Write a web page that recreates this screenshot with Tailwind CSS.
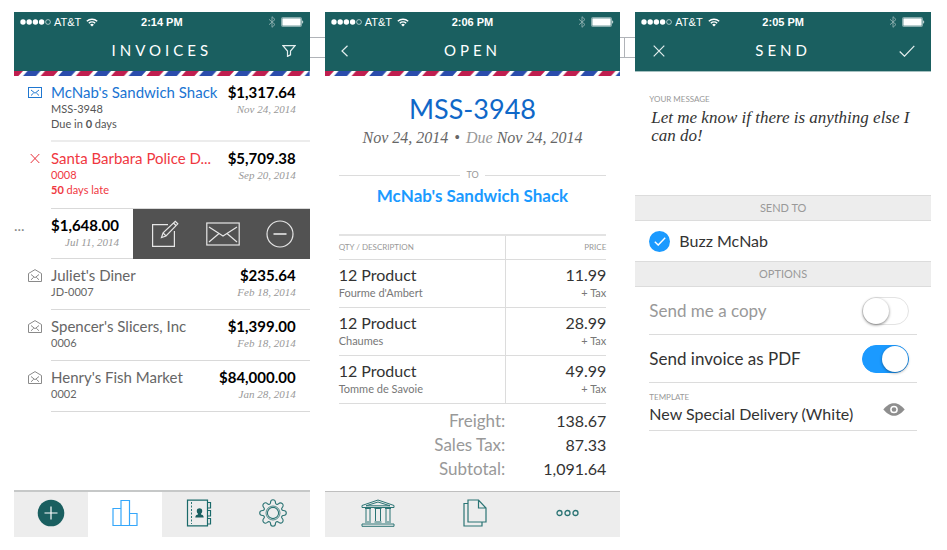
<!DOCTYPE html>
<html lang="en">
<head>
    <meta charset="UTF-8">
    <meta name="viewport" content="width=device-width, initial-scale=1.0">
    <title>Invoices</title>
    <script src="https://cdn.jsdelivr.net/npm/@tailwindcss/browser@4"></script>
</head>
<body class="bg-white font-['Lato',sans-serif] text-[#333]">
    <!-- shared symbols -->
    <svg class="absolute w-0 h-0" aria-hidden="true">
        <defs>
            <pattern id="airmail" width="35.2" height="5" patternUnits="userSpaceOnUse">
                <rect width="35.2" height="5" fill="#fff"/>
                <path d="M13.500 0h13l-4.500 5h-13z" fill="#2a4cac"/>
                <path d="M31.100 0h13l-4.500 5h-13zM-4.100 0h13l-4.500 5h-13z" fill="#bf1e4f"/>
            </pattern>
            <symbol id="signal" viewBox="0 0 31 12">
                <g fill="#fff"><circle cx="3" cy="6" r="2.700"/><circle cx="9.200" cy="6" r="2.700"/><circle cx="15.400" cy="6" r="2.700"/><circle cx="21.600" cy="6" r="2.700"/></g>
                <circle cx="28" cy="6" r="2.400" fill="none" stroke="#fff" stroke-width=".6"/>
            </symbol>
            <symbol id="wifi" viewBox="0 0 12 9">
                <g fill="none" stroke="#fff" stroke-width="1.400"><path d="M.8 3.300a7.500 7.500 0 0 1 10.400 0"/><path d="M2.800 5.300a4.600 4.600 0 0 1 6.400 0"/></g>
                <path d="M6 8.600L4.100 6.700a2.700 2.700 0 0 1 3.800 0z" fill="#fff"/>
            </symbol>
            <symbol id="bluetooth" viewBox="0 0 8 12">
                <path d="M1 3.300l6 5.200L4 11.300V.7l3 2.800-6 5.200" fill="none" stroke="#8fb0b0" stroke-width=".9"/>
            </symbol>
            <symbol id="battery" viewBox="0 0 23 10">
                <rect x=".5" y=".5" width="20" height="9" rx="1" fill="none" stroke="#b5cccc" stroke-width=".7"/>
                <rect x="1.300" y="1.300" width="18.400" height="7.400" fill="#fff"/>
                <path d="M21.300 3.300c1.200.4 1.200 3 0 3.400z" fill="#fff"/>
            </symbol>
            <symbol id="opened" viewBox="0 0 14 13">
                <g fill="none" stroke="#8a8a8a"><path d="M.5 4.500L7 .6l6.500 3.900v8H.5z"/><path d="M3 5.500l4 3.200 4-3.200M3 10.800l2.700-2.500M11 10.800L8.300 8.300"/></g>
            </symbol>
        </defs>
    </svg>

    <main class="relative grid grid-cols-3 gap-[15px] min-h-screen pl-[14px] pr-4 pt-3 pb-[13px]">
        <!-- wire behind the screens -->
        <div class="absolute top-[37px] inset-x-1/4 h-[21px] border-y border-[#b0b3b8] flex" aria-hidden="true">
            <div class="w-[82%] border-r border-[#b0b3b8]"></div>
        </div>

        <!-- Invoices -->
        <section class="relative flex flex-col bg-white min-w-0">
            <header class="bg-[#1a5f60] text-white">
                <div class="grid grid-cols-3 items-center h-5 px-[6px] font-['Liberation_Sans',sans-serif] text-[11px]">
                    <div class="flex items-center gap-[3px]">
                        <svg class="w-[31px] h-3"><use href="#signal"/></svg>
                        <span>AT&amp;T</span>
                        <svg class="w-3 h-[9px] ml-[2px]"><use href="#wifi"/></svg>
                    </div>
                    <span class="text-center font-bold">2:14 PM</span>
                    <div class="flex items-center justify-end gap-[5px]">
                        <svg class="w-2 h-3"><use href="#bluetooth"/></svg>
                        <svg class="w-[23px] h-[10px]"><use href="#battery"/></svg>
                    </div>
                </div>
                <div class="grid grid-cols-[40px_1fr_40px] items-center h-[39px] pb-[2px]">
                    <span></span>
                    <h1 class="text-center text-[15px] tracking-[4px]">INVOICES</h1>
                    <button type="button" aria-label="Filter" class="justify-self-end mr-[14px]">
                        <svg class="block w-[14px] h-3" viewBox="0 0 14 12" fill="none" stroke="#e3eeee" stroke-width="1.200"><path d="M1 .7h12L8.500 6v3.800l-3 1.600V6z"/></svg>
                    </button>
                </div>
            </header>
            <svg class="block w-full h-[5px]" aria-hidden="true"><rect width="100%" height="5" fill="url(#airmail)"/></svg>

            <ul>
                <li class="flex">
                    <div class="w-[37px] shrink-0 pt-[11px] pl-[14px]">
                        <svg class="w-[14px] h-[11px]" viewBox="0 0 14 11" fill="none" stroke="#2077d0"><rect x=".5" y=".5" width="13" height="10"/><path d="M3 3l4 3.200L11 3M3 8.500l2.700-2.600M11 8.500L8.300 5.900"/></svg>
                    </div>
                    <div class="grow min-w-0 flex gap-2 pt-[7px] pb-[9px] pr-[14px] border-b-2 border-[#ececec]">
                        <div class="grow min-w-0 text-[11px] leading-[15px] text-[#555]">
                            <a href="#" class="block truncate text-[15px] leading-[18px] text-[#1a74d2]">McNab's Sandwich Shack</a>
                            <p>MSS-3948</p>
                            <p>Due in <b>0</b> days</p>
                        </div>
                        <div class="text-right shrink-0">
                            <p class="text-[15px] leading-[18px] font-bold text-black">$1,317.64</p>
                            <p class="font-['Liberation_Serif',serif] italic text-[11px] leading-4 text-[#999]">Nov 24, 2014</p>
                        </div>
                    </div>
                </li>
                <li class="flex">
                    <div class="w-[37px] shrink-0 pt-[11px] pl-4">
                        <svg class="w-[10px] h-[11px]" viewBox="0 0 10 11" fill="none" stroke="#e8303a"><path d="M.7 1l8.600 9M9.300 1L.7 10"/></svg>
                    </div>
                    <div class="grow min-w-0 flex gap-2 pt-[7px] pb-[11px] pr-[14px] border-b border-[#d9d9d9]">
                        <div class="grow min-w-0 text-[11px] leading-[15px] text-[#f0383f]">
                            <a href="#" class="block truncate text-[15px] leading-[18px]">Santa Barbara Police D...</a>
                            <p>0008</p>
                            <p><b>50</b> days late</p>
                        </div>
                        <div class="text-right shrink-0">
                            <p class="text-[15px] leading-[18px] font-bold text-black">$5,709.38</p>
                            <p class="font-['Liberation_Serif',serif] italic text-[11px] leading-4 text-[#999]">Sep 20, 2014</p>
                        </div>
                    </div>
                </li>
                <!-- swiped row with its actions -->
                <li class="flex">
                    <div class="w-[37px] shrink-0 pt-[7px] text-[15px] leading-[18px] text-[#888]">...</div>
                    <div class="grow text-right pt-[7px] pb-2 pr-[14px] border-b border-[#d9d9d9]">
                        <p class="text-[15px] leading-[18px] font-bold text-black">$1,648.00</p>
                        <p class="font-['Liberation_Serif',serif] italic text-[11px] leading-4 text-[#999]">Jul 11, 2014</p>
                    </div>
                    <div class="w-3/5 shrink-0 flex items-center justify-between pl-[18px] pr-4 bg-[#525252]">
                        <button type="button" aria-label="Edit">
                            <svg class="block w-7 h-7" viewBox="0 0 28 28" fill="none" stroke="#e6e6e6" stroke-width="1.200"><path d="M17 4.600H1.600v21.800h21.800V11"/><path d="M10.500 17.500l1.600-4.600L24.300 1.300l2.500 2.500L15 16z M12.100 12.900L15 16M22.500 3l2.500 2.500"/></svg>
                        </button>
                        <button type="button" aria-label="Email">
                            <svg class="block w-[34px] h-6" viewBox="0 0 34 24" fill="none" stroke="#e6e6e6" stroke-width="1.200"><rect x=".8" y="1" width="32.400" height="22"/><path d="M3 5l14 9 14-9M3 20l10-8.500M31 20l-10-8.500"/></svg>
                        </button>
                        <button type="button" aria-label="Remove">
                            <svg class="block w-7 h-7" viewBox="0 0 28 28" fill="none" stroke="#e6e6e6" stroke-width="1.200"><circle cx="14" cy="14" r="13"/><path d="M7.500 14h13" stroke-width="1.600"/></svg>
                        </button>
                    </div>
                </li>
                <li class="flex">
                    <div class="w-[37px] shrink-0 pt-[10px] pl-[14px]"><svg class="w-[14px] h-[13px]"><use href="#opened"/></svg></div>
                    <div class="grow min-w-0 flex gap-2 pt-[7px] pb-[9px] pr-[14px] border-b border-[#d9d9d9]">
                        <div class="grow min-w-0 text-[11px] leading-4 text-[#666]">
                            <a href="#" class="block truncate text-[15px] leading-[18px]">Juliet's Diner</a>
                            <p>JD-0007</p>
                        </div>
                        <div class="text-right shrink-0">
                            <p class="text-[15px] leading-[18px] font-bold text-black">$235.64</p>
                            <p class="font-['Liberation_Serif',serif] italic text-[11px] leading-4 text-[#999]">Feb 18, 2014</p>
                        </div>
                    </div>
                </li>
                <li class="flex">
                    <div class="w-[37px] shrink-0 pt-[10px] pl-[14px]"><svg class="w-[14px] h-[13px]"><use href="#opened"/></svg></div>
                    <div class="grow min-w-0 flex gap-2 pt-[7px] pb-[9px] pr-[14px] border-b border-[#d9d9d9]">
                        <div class="grow min-w-0 text-[11px] leading-4 text-[#666]">
                            <a href="#" class="block truncate text-[15px] leading-[18px]">Spencer's Slicers, Inc</a>
                            <p>0006</p>
                        </div>
                        <div class="text-right shrink-0">
                            <p class="text-[15px] leading-[18px] font-bold text-black">$1,399.00</p>
                            <p class="font-['Liberation_Serif',serif] italic text-[11px] leading-4 text-[#999]">Feb 18, 2014</p>
                        </div>
                    </div>
                </li>
                <li class="flex">
                    <div class="w-[37px] shrink-0 pt-[10px] pl-[14px]"><svg class="w-[14px] h-[13px]"><use href="#opened"/></svg></div>
                    <div class="grow min-w-0 flex gap-2 pt-[7px] pb-[9px] pr-[14px] border-b border-[#d9d9d9]">
                        <div class="grow min-w-0 text-[11px] leading-4 text-[#666]">
                            <a href="#" class="block truncate text-[15px] leading-[18px]">Henry's Fish Market</a>
                            <p>0002</p>
                        </div>
                        <div class="text-right shrink-0">
                            <p class="text-[15px] leading-[18px] font-bold text-black">$84,000.00</p>
                            <p class="font-['Liberation_Serif',serif] italic text-[11px] leading-4 text-[#999]">Jan 28, 2014</p>
                        </div>
                    </div>
                </li>
            </ul>

            <nav class="mt-auto grid grid-cols-4 h-[47px] border-t-2 border-[#c6c8c8] bg-[#ededed]">
                <a href="#" aria-label="New invoice" class="flex items-center justify-center pb-[3px]">
                    <svg class="w-7 h-7" viewBox="0 0 28 28"><circle cx="14" cy="14" r="13.300" fill="#1a5f60"/><path d="M14 7.500v13M7.500 14h13" stroke="#fff" stroke-width="1.200"/></svg>
                </a>
                <a href="#" aria-label="Reports" class="flex items-center justify-center pb-[3px] bg-white">
                    <svg class="w-[26px] h-7" viewBox="0 0 26 28" fill="none" stroke="#35a7fb" stroke-width="1.200"><path d="M1 9.500h8v17H1zM9 1.500h8.500v25H9zM17.500 14.500H25v12h-7.500z"/></svg>
                </a>
                <a href="#" aria-label="Contacts" class="flex items-center justify-center pb-[3px]">
                    <svg class="w-[26px] h-7" viewBox="0 0 26 28" fill="none" stroke="#1a6a6a" stroke-width="1.200"><path d="M1.500 1.200h20v25.600h-20z"/><path d="M5.500 3v22" stroke-dasharray="2 1.500" stroke-width=".9"/><path d="M21.500 3.500h3v5.500h-3M21.500 11.500h3V17h-3M21.500 19.500h3V25h-3"/><path d="M13.500 9.300a2.700 2.700 0 0 1 2.700 2.900c0 1.300-.6 2-1.200 2.600v.8c1.400.3 2.700 1 2.700 3H9.300c0-2 1.300-2.700 2.700-3v-.8c-.6-.6-1.200-1.300-1.200-2.600a2.700 2.700 0 0 1 2.700-2.900z" fill="#1a5f60" stroke="none"/></svg>
                </a>
                <a href="#" aria-label="Settings" class="flex items-center justify-center pb-[3px]">
                    <svg class="w-7 h-7" viewBox="0 0 28 28" fill="none" stroke="#2b7474" stroke-width="1.100">
                        <path d="M11.500 3.700c0-4 5-4 5 0 0 1.500 1.800 2.200 2.900 1.100 2.700-2.700 6.500 1.100 3.800 3.800-1.100 1.100-.4 2.900 1.100 2.900 4 0 4 5 0 5-1.500 0-2.200 1.800-1.100 2.900 2.700 2.700-1.100 6.500-3.800 3.800-1.100-1.100-2.900-.4-2.900 1.100 0 4-5 4-5 0 0-1.500-1.800-2.200-2.900-1.100-2.700 2.700-6.500-1.100-3.800-3.800 1.100-1.100.4-2.900-1.100-2.900-4 0-4-5 0-5 1.500 0 2.200-1.800 1.100-2.900-2.700-2.700 1.100-6.500 3.800-3.800 1.100 1.100 2.900.4 2.900-1.100z"/>
                        <circle cx="14" cy="14" r="7" stroke-width=".8"/><circle cx="14" cy="14" r="5.600"/>
                    </svg>
                </a>
            </nav>
        </section>

        <!-- Open invoice -->
        <section class="relative flex flex-col bg-white min-w-0">
            <header class="bg-[#1a5f60] text-white">
                <div class="grid grid-cols-3 items-center h-5 px-[6px] font-['Liberation_Sans',sans-serif] text-[11px]">
                    <div class="flex items-center gap-[3px]">
                        <svg class="w-[31px] h-3"><use href="#signal"/></svg>
                        <span>AT&amp;T</span>
                        <svg class="w-3 h-[9px] ml-[2px]"><use href="#wifi"/></svg>
                    </div>
                    <span class="text-center font-bold">2:06 PM</span>
                    <div class="flex items-center justify-end gap-[5px]">
                        <svg class="w-2 h-3"><use href="#bluetooth"/></svg>
                        <svg class="w-[23px] h-[10px]"><use href="#battery"/></svg>
                    </div>
                </div>
                <div class="grid grid-cols-[40px_1fr_40px] items-center h-[39px] pb-[2px]">
                    <button type="button" aria-label="Back" class="ml-4">
                        <svg class="block w-2 h-3" viewBox="0 0 8 12" fill="none" stroke="#e3eeee" stroke-width="1.200"><path d="M6.500.7L1 6l5.500 5.300"/></svg>
                    </button>
                    <h1 class="text-center text-[15px] tracking-[4px]">OPEN</h1>
                </div>
            </header>
            <svg class="block w-full h-[5px]" aria-hidden="true"><rect width="100%" height="5" fill="url(#airmail)"/></svg>

            <div class="px-[14px] pt-4">
                <h2 class="text-center text-[27px] leading-[34px] text-[#1068c8]">MSS-3948</h2>
                <p class="text-center font-['Liberation_Serif',serif] italic text-[16px] leading-6 text-[#666]">Nov 24, 2014 <span class="px-[2px]">•</span> <span class="text-[#999]">Due</span> Nov 24, 2014</p>
                <div class="flex items-center gap-[6px] mt-5 text-[9px] leading-[10px] text-[#999] before:grow before:h-px before:bg-[#dcdcdc] after:grow after:h-px after:bg-[#dcdcdc]">TO</div>
                <p class="mt-1 leading-6 text-center"><a href="#" class="text-[17px] font-bold text-[#1b9aff]">McNab's Sandwich Shack</a></p>

                <table class="w-full mt-[26px] border-t-2 border-[#e3e3e3]">
                    <thead>
                        <tr class="h-6 border-b border-[#dcdcdc] text-[8px] text-[#999]">
                            <th class="text-left font-normal border-r border-[#dcdcdc]">QTY / DESCRIPTION</th>
                            <th class="w-[101px] text-right font-normal">PRICE</th>
                        </tr>
                    </thead>
                    <tbody>
                        <tr class="h-12 border-b border-[#dcdcdc] text-[11px] leading-4 text-[#777]">
                            <td class="border-r border-[#dcdcdc]"><p class="text-[16px] leading-5 text-[#333]">12 Product</p>Fourme d'Ambert</td>
                            <td class="text-right"><p class="text-[16px] leading-5 text-[#333]">11.99</p>+ Tax</td>
                        </tr>
                        <tr class="h-12 border-b border-[#dcdcdc] text-[11px] leading-4 text-[#777]">
                            <td class="border-r border-[#dcdcdc]"><p class="text-[16px] leading-5 text-[#333]">12 Product</p>Chaumes</td>
                            <td class="text-right"><p class="text-[16px] leading-5 text-[#333]">28.99</p>+ Tax</td>
                        </tr>
                        <tr class="h-12 border-b border-[#dcdcdc] text-[11px] leading-4 text-[#777]">
                            <td class="border-r border-[#dcdcdc]"><p class="text-[16px] leading-5 text-[#333]">12 Product</p>Tomme de Savoie</td>
                            <td class="text-right"><p class="text-[16px] leading-5 text-[#333]">49.99</p>+ Tax</td>
                        </tr>
                    </tbody>
                </table>
                <dl class="grid grid-cols-[1fr_101px] mt-[5px] text-right text-[16px] leading-6">
                    <dt class="text-[17px] text-[#999]">Freight:</dt><dd>138.67</dd>
                    <dt class="text-[17px] text-[#999]">Sales Tax:</dt><dd>87.33</dd>
                    <dt class="text-[17px] text-[#999]">Subtotal:</dt><dd>1,091.64</dd>
                </dl>
            </div>

            <nav class="mt-auto flex items-center justify-between h-[46px] pb-[3px] pl-9 pr-[41px] border-t border-[#bfbfbf] bg-[#ededed]">
                <button type="button" aria-label="Payments">
                    <svg class="block w-[34px] h-7" viewBox="0 0 34 28" fill="none" stroke="#2b7474"><path d="M1 6.500L17 1l16 5.500v2H1zM5 6.800L17 3l12 3.800z"/><path d="M4 9.500h6M13.500 9.500h7M24 9.500h6M5 10v12M9 10v12M14.500 10v12M19.500 10v12M25 10v12M29 10v12M4 23h6M13.500 23h7M24 23h6"/><path d="M1 25h32v2.300H1z"/></svg>
                </button>
                <button type="button" aria-label="Duplicate">
                    <svg class="block w-6 h-7" viewBox="0 0 24 28" fill="none" stroke="#2b7474" stroke-width="1.200"><path d="M5 1h10.500l7.500 8v14H5zM15.500 1v8H23"/><path d="M5 4.500H1V27h18v-4"/></svg>
                </button>
                <button type="button" aria-label="More">
                    <svg class="block w-[23px] h-2" viewBox="0 0 23 8" fill="none" stroke="#2b7474" stroke-width="1.300"><circle cx="3.500" cy="4" r="2.500"/><circle cx="11.500" cy="4" r="2.500"/><circle cx="19.500" cy="4" r="2.500"/></svg>
                </button>
            </nav>
        </section>

        <!-- Send invoice -->
        <section class="relative flex flex-col bg-white min-w-0">
            <header class="bg-[#1a5f60] text-white">
                <div class="grid grid-cols-3 items-center h-5 px-[6px] font-['Liberation_Sans',sans-serif] text-[11px]">
                    <div class="flex items-center gap-[3px]">
                        <svg class="w-[31px] h-3"><use href="#signal"/></svg>
                        <span>AT&amp;T</span>
                        <svg class="w-3 h-[9px] ml-[2px]"><use href="#wifi"/></svg>
                    </div>
                    <span class="text-center font-bold">2:05 PM</span>
                    <div class="flex items-center justify-end gap-[5px]">
                        <svg class="w-2 h-3"><use href="#bluetooth"/></svg>
                        <svg class="w-[23px] h-[10px]"><use href="#battery"/></svg>
                    </div>
                </div>
                <div class="grid grid-cols-[40px_1fr_40px] items-center h-[39px] pb-[2px]">
                    <button type="button" aria-label="Cancel" class="ml-[18px]">
                        <svg class="block w-3 h-3" viewBox="0 0 12 12" fill="none" stroke="#e3eeee" stroke-width="1.200"><path d="M.7.7l10.600 10.600M11.300.7L.7 11.300"/></svg>
                    </button>
                    <h1 class="text-center text-[15px] tracking-[4px]">SEND</h1>
                    <button type="button" aria-label="Send" class="justify-self-end mr-4">
                        <svg class="block w-4 h-3" viewBox="0 0 16 12" fill="none" stroke="#e3eeee" stroke-width="1.200"><path d="M.7 6.500l4.800 4.700L15.300.8"/></svg>
                    </button>
                </div>
            </header>

            <form>
                <div class="px-[14px] pt-[21px] pb-[9px] border-t border-[#a5c0c0]">
                    <label for="message" class="block text-[8px] leading-3 text-[#999]">YOUR MESSAGE</label>
                    <textarea id="message" rows="4" class="block w-full resize-none pl-[2px] pt-1 h-[81px] font-['Liberation_Serif',serif] italic text-[17px] leading-[18px] text-[#333]">Let me know if there is anything else I can do!</textarea>
                </div>

                <h2 class="h-[26px] border-y border-[#dcdcdc] bg-[#ededed] text-center text-[11px] leading-6 text-[#999]">SEND TO</h2>
                <label class="flex items-center gap-[9px] h-10 px-[14px] text-[16px]">
                    <span class="grid">
                        <input type="checkbox" checked class="appearance-none col-start-1 row-start-1 size-[21px] rounded-full bg-[#1b9aff]">
                        <svg class="col-start-1 row-start-1 place-self-center w-3 h-[9px] pointer-events-none" viewBox="0 0 12 9" fill="none" stroke="#fff" stroke-width="1.400"><path d="M.8 4.800l3.400 3.300L11.200.8"/></svg>
                    </span>
                    Buzz McNab
                </label>

                <h2 class="h-[26px] border-y border-[#dcdcdc] bg-[#ededed] text-center text-[11px] leading-6 text-[#999]">OPTIONS</h2>
                <div class="px-[14px] text-[16px]">
                    <label class="flex items-center justify-between h-12 pr-2 border-b border-[#dcdcdc] text-[17px] text-[#999]">
                        Send me a copy
                        <input type="checkbox" role="switch" class="appearance-none w-[47px] h-7 rounded-full border border-[#e3e3e3] before:block before:size-[26px] before:rounded-full before:bg-white before:shadow-[0_1px_3px_#00000080]">
                    </label>
                    <label class="flex items-center justify-between h-12 pr-2 border-b border-[#dcdcdc] text-[17px]">
                        Send invoice as PDF
                        <input type="checkbox" role="switch" checked class="appearance-none w-[47px] h-7 rounded-full border border-[#1b9aff] bg-[#1b9aff] before:block before:size-[26px] before:ml-auto before:rounded-full before:bg-white before:shadow-[0_1px_3px_#00000066]">
                    </label>
                    <div class="flex items-center justify-between h-12 pt-[5px] pr-3 border-b border-[#dcdcdc]">
                        <div>
                            <label for="template" class="block text-[8px] leading-[10px] text-[#999]">TEMPLATE</label>
                            <select id="template" class="block appearance-none leading-6">
                                <option>New Special Delivery (White)</option>
                            </select>
                        </div>
                        <button type="button" aria-label="Preview template">
                            <svg class="block w-[22px] h-[13px]" viewBox="0 0 22 13"><path d="M.3 6.500C4.500 1.800 7.500.3 11 .3s6.500 1.500 10.700 6.200c-4.200 4.700-7.200 6.200-10.700 6.200S4.500 11.200.3 6.500z" fill="#8e8e8e"/><circle cx="11" cy="6.500" r="3.100" fill="none" stroke="#fff" stroke-width="1.500"/></svg>
                        </button>
                    </div>
                </div>
            </form>
        </section>
    </main>
</body>
</html>
